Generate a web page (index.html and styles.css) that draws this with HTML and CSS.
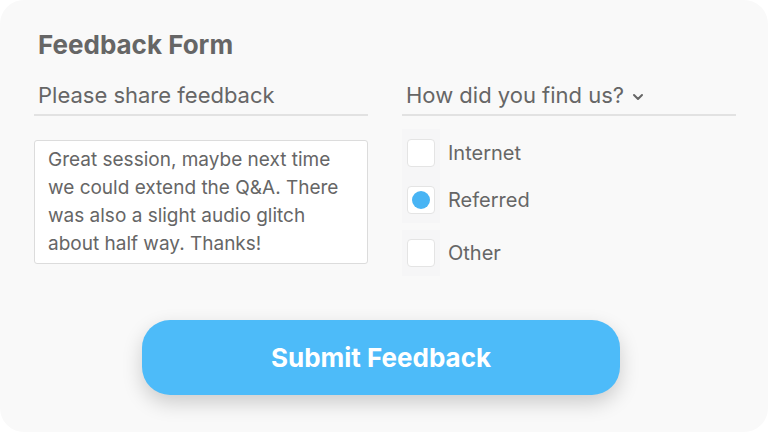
FILE: index.html
```html
<!DOCTYPE html>
<html lang="en">
<head>
<meta charset="utf-8">
<title>Feedback Form</title>
<link rel="stylesheet" href="styles.css">
</head>
<body>
<main class="card">
  <h1 class="title">Feedback Form</h1>
  <div class="columns">
    <section class="col">
      <div class="field">Please share feedback</div>
      <div class="textbox">Great session, maybe next time we could extend the Q&amp;A. There was also a slight audio glitch about half way. Thanks!</div>
    </section>
    <section class="col">
      <div class="field select">
        <span>How did you find us?</span>
        <svg class="chev" width="12" height="8" viewBox="0 0 12 8"><path d="M2 2 L6 6 L10 2" fill="none" stroke="#666" stroke-width="2" stroke-linecap="round" stroke-linejoin="round"/></svg>
      </div>
      <ul class="options">
        <li class="option first"><span class="mark"><span class="box"></span></span><span class="label">Internet</span></li>
        <li class="option"><span class="mark"><span class="box"><span class="dot"></span></span></span><span class="label">Referred</span></li>
        <li class="option separate"><span class="mark"><span class="box"></span></span><span class="label">Other</span></li>
      </ul>
    </section>
  </div>
  <div class="actions">
    <button class="submit">Submit Feedback</button>
  </div>
</main>
</body>
</html>
```
FILE: styles.css
```css
html, body {
  margin: 0;
  padding: 0;
  background: #ffffff;
}
body {
  font-family: Inter, "Noto Sans", "Liberation Sans", sans-serif;
  color: #666666;
}
.card {
  width: 768px;
  height: 432px;
  box-sizing: border-box;
  background: #f9f9f9;
  border-radius: 24px;
  padding: 30px 32px 0 34px;
  display: flex;
  flex-direction: column;
}
.title {
  margin: 0 0 0 4px;
  font-size: 26px;
  line-height: 30px;
  font-weight: 700;
  color: #666666;
}
.columns {
  display: grid;
  grid-template-columns: 334px 334px;
  column-gap: 34px;
  margin-top: 21px;
}
.col {
  display: flex;
  flex-direction: column;
}
.field {
  font-size: 22px;
  line-height: 28px;
  padding: 0 0 5px 4px;
  border-bottom: 2px solid #e2e2e2;
  color: #666666;
}
.select {
  display: flex;
  align-items: center;
}
.chev {
  margin-left: 8px;
  margin-top: 3px;
}
.textbox {
  margin-top: 24px;
  height: 124px;
  box-sizing: border-box;
  background: #ffffff;
  border: 1px solid #dcdcdc;
  border-radius: 3px;
  padding: 5px 6px 5px 13px;
  font-size: 19px;
  line-height: 28px;
  color: #666666;
}
.options {
  list-style: none;
  margin: 13px 0 0 0;
  padding: 0;
}
.option {
  display: flex;
  align-items: center;
  height: 46px;
}
.option.first {
  height: 48px;
}
.option.separate {
  margin-top: 7px;
}
.mark {
  width: 38px;
  height: 100%;
  background: #f6f6f7;
  display: flex;
  align-items: center;
  padding-left: 5px;
  box-sizing: border-box;
}
.box {
  width: 28px;
  height: 28px;
  box-sizing: border-box;
  background: #ffffff;
  border: 1px solid #e4e4e4;
  border-radius: 4px;
  display: flex;
  align-items: center;
  justify-content: center;
}
.dot {
  width: 18px;
  height: 18px;
  border-radius: 50%;
  background: #48b4f4;
}
.label {
  margin-left: 8px;
  font-size: 20px;
  line-height: 28px;
  color: #666666;
}
.actions {
  display: flex;
  justify-content: center;
  padding-right: 8px;
  margin-top: 44px;
}
.submit {
  width: 478px;
  height: 75px;
  border: none;
  border-radius: 28px;
  background: #4dbbf9;
  color: #ffffff;
  font-family: Inter, "Noto Sans", "Liberation Sans", sans-serif;
  font-size: 26px;
  font-weight: 700;
  box-shadow: 0 8px 20px rgba(0, 0, 0, 0.18);
  cursor: pointer;
}
```
